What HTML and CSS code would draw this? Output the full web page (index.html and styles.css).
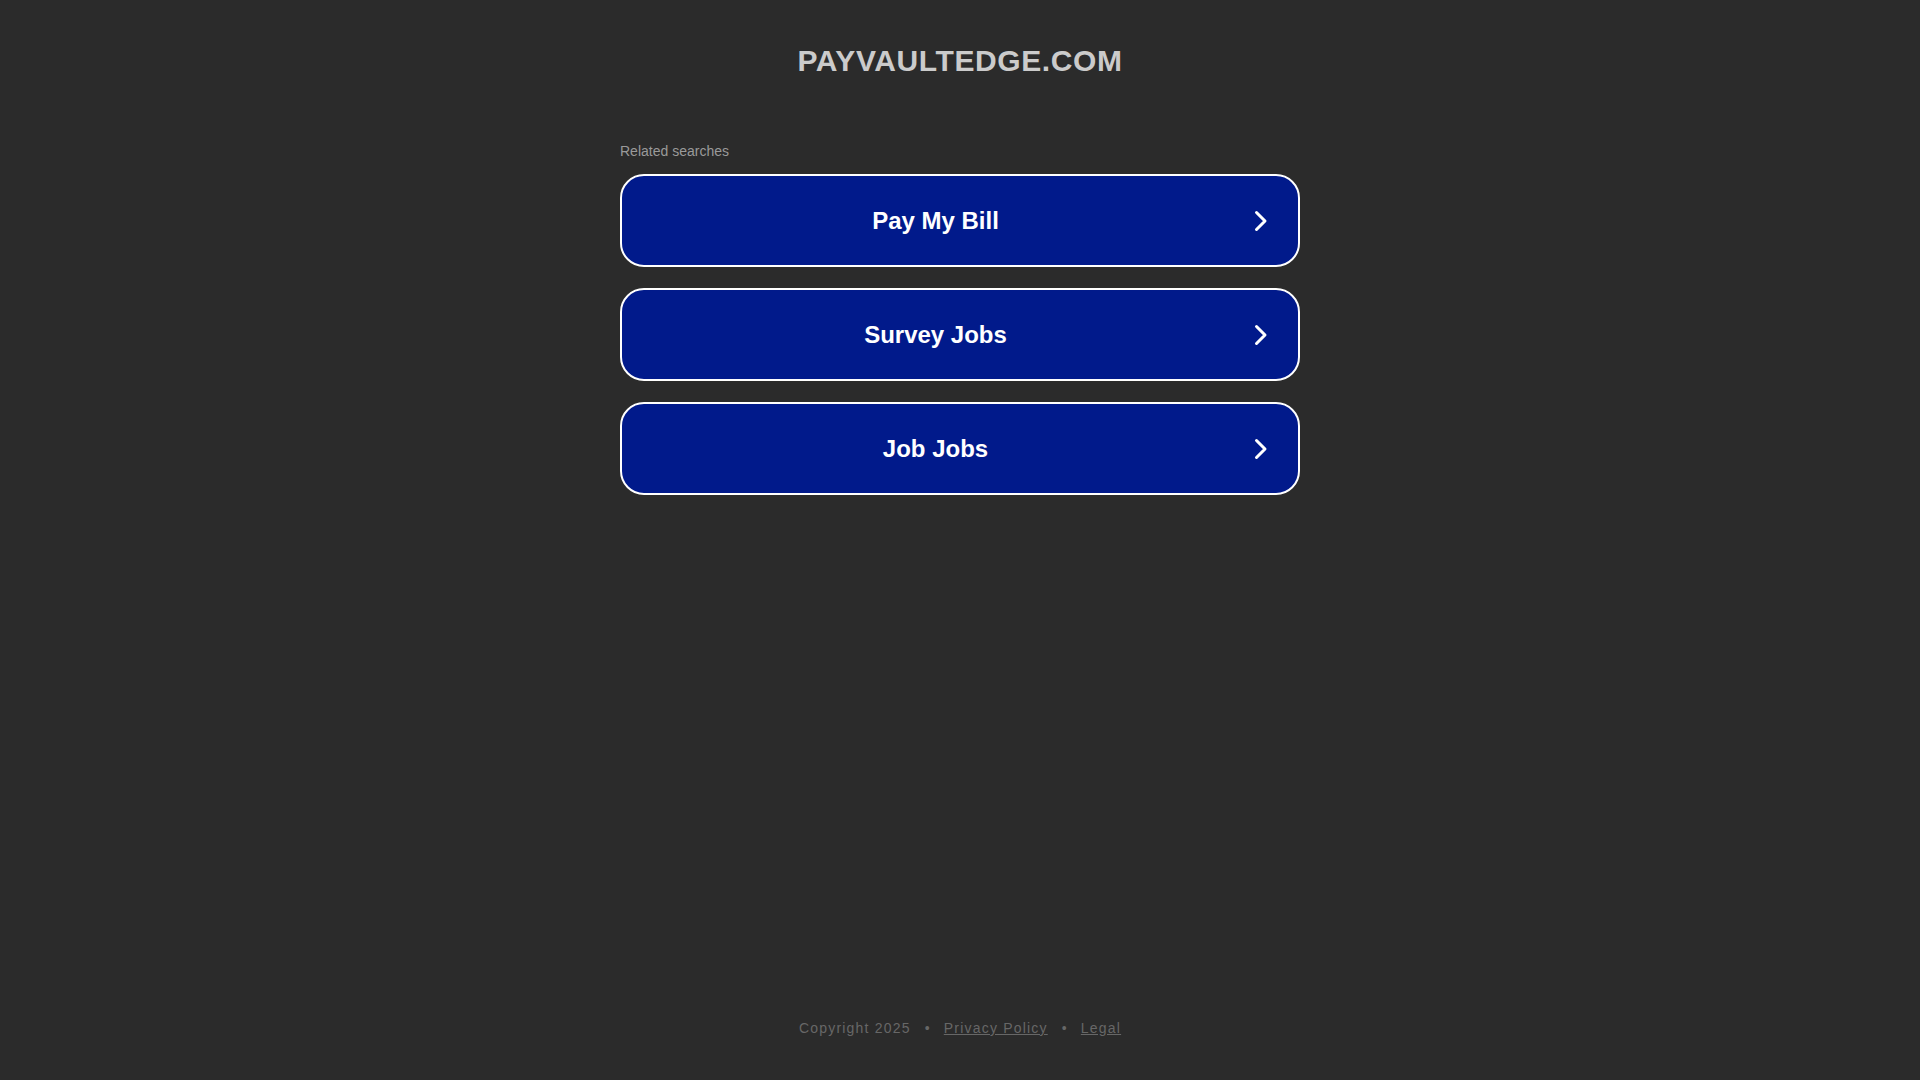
FILE: index.html
```html
<!DOCTYPE html>
<html lang="en">
<head>
<meta charset="utf-8">
<title>payvaultedge.com</title>
<link rel="stylesheet" href="styles.css">
</head>
<body>
<div class="page">
  <header class="header">
    <h1 class="domain">PAYVAULTEDGE.COM</h1>
  </header>
  <main class="main">
    <div class="related">
      <p class="related-title">Related searches</p>
      <div class="links">
        <a class="link" href="#"><span class="link-text">Pay My Bill</span><svg class="chev" viewBox="0 0 14 22" width="14" height="22"><path d="M2.5 2.5 L11 11 L2.5 19.5" fill="none" stroke="#fff" stroke-width="3" stroke-linecap="round" stroke-linejoin="round"/></svg></a>
        <a class="link" href="#"><span class="link-text">Survey Jobs</span><svg class="chev" viewBox="0 0 14 22" width="14" height="22"><path d="M2.5 2.5 L11 11 L2.5 19.5" fill="none" stroke="#fff" stroke-width="3" stroke-linecap="round" stroke-linejoin="round"/></svg></a>
        <a class="link" href="#"><span class="link-text">Job Jobs</span><svg class="chev" viewBox="0 0 14 22" width="14" height="22"><path d="M2.5 2.5 L11 11 L2.5 19.5" fill="none" stroke="#fff" stroke-width="3" stroke-linecap="round" stroke-linejoin="round"/></svg></a>
      </div>
    </div>
  </main>
  <footer class="footer">
    <span>Copyright 2025</span>
    <span class="dot">•</span>
    <a class="flink" href="#">Privacy Policy</a>
    <span class="dot">•</span>
    <a class="flink" href="#">Legal</a>
  </footer>
</div>
</body>
</html>
```

FILE: styles.css
```css
html, body {
  margin: 0;
  padding: 0;
  height: 100%;
}
body {
  background: #2b2b2b;
  font-family: "Liberation Sans", Arial, sans-serif;
}
.page {
  min-height: 100vh;
  display: flex;
  flex-direction: column;
}
.header {
  padding-top: 43px;
  text-align: center;
}
.domain {
  margin: 0;
  font-size: 30px;
  line-height: 35px;
  letter-spacing: 0.6px;
  font-weight: bold;
  color: #cbcbcb;
}
.main {
  flex: 1;
  display: flex;
  justify-content: center;
}
.related {
  width: 680px;
  padding-top: 65px;
}
.related-title {
  margin: 0 0 14px 0;
  font-size: 14px;
  line-height: 17px;
  color: #9a9a9a;
}
.links {
  display: flex;
  flex-direction: column;
  gap: 21px;
}
.link {
  box-sizing: border-box;
  height: 93px;
  display: flex;
  align-items: center;
  padding: 0 30px 0 0;
  background: #011a8b;
  border: 2px solid #ffffff;
  border-radius: 24px;
  text-decoration: none;
  color: #ffffff;
}
.link-text {
  flex: 1;
  text-align: center;
  font-size: 24px;
  font-weight: bold;
  margin-right: 5px;
}
.chev {
  display: block;
  flex: none;
}
.footer {
  display: flex;
  justify-content: center;
  align-items: center;
  padding-bottom: 43px;
  font-size: 14px;
  line-height: 17px;
  letter-spacing: 1.2px;
  color: #676767;
}
.dot {
  margin: 0 13px 0 14px;
}
.flink {
  color: #676767;
  text-decoration: underline;
}
```
